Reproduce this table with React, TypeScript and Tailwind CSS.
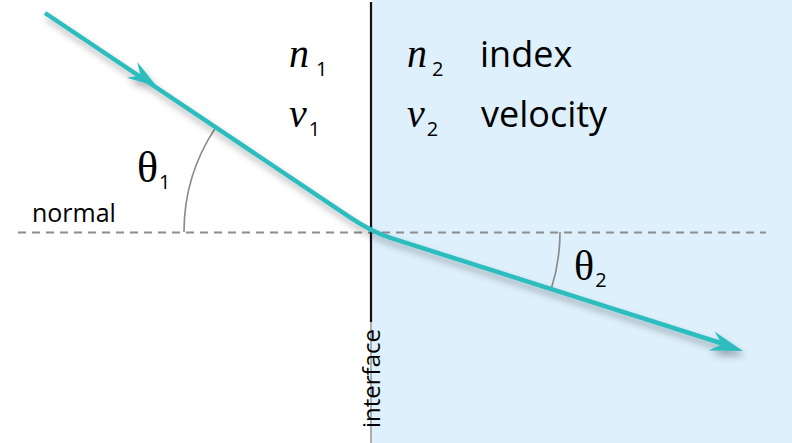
import React from "react";

const RAY = "#2ebdbe";

function arrowHead(tx: number, ty: number, dx: number, dy: number, back: number, notch: number, half: number) {
  const l = Math.hypot(dx, dy);
  const ux = dx / l;
  const uy = dy / l;
  const nx = -uy;
  const ny = ux;
  const p = (a: number, b: number) => `${(tx + a * ux + b * nx).toFixed(1)},${(ty + a * uy + b * ny).toFixed(1)}`;
  return `${p(0, 0)} ${p(-back, -half)} ${p(-notch, 0)} ${p(-back, half)}`;
}

function Diagram() {
  return (
    <svg className="absolute inset-0" width={792} height={443} viewBox="0 0 792 443">
      <defs>
        <filter id="sh" x="-20%" y="-20%" width="140%" height="160%">
          <feDropShadow dx="2" dy="5" stdDeviation="3.5" floodColor="#000" floodOpacity="0.3" />
        </filter>
      </defs>
      <line x1={18} y1={232.5} x2={766} y2={232.5} stroke="#8c8c8c" strokeWidth={2} strokeDasharray="8 6" />
      <line x1={371} y1={2} x2={371} y2={322} stroke="#111" strokeWidth={2.2} />
      <line x1={371} y1={322} x2={371} y2={443} stroke="#9a9a9a" strokeWidth={1.6} />
      <path d="M 215.8 127.4 A 188 188 0 0 0 184 232" fill="none" stroke="#8c8c8c" strokeWidth={1.7} />
      <path d="M 560 232 A 188 188 0 0 1 551.2 289" fill="none" stroke="#8c8c8c" strokeWidth={1.7} />
      <g filter="url(#sh)">
        <path
          d="M 45 13 L 350 217.3 Q 372 232 392 238.4 L 730 346"
          fill="none"
          stroke={RAY}
          strokeWidth={4.5}
          strokeLinejoin="round"
        />
        <polygon points={arrowHead(157, 86.5, 0.831, 0.556, 30, 20, 9.5)} fill={RAY} />
        <polygon points={arrowHead(743, 351, 0.953, 0.303, 33, 22, 10)} fill={RAY} />
      </g>
    </svg>
  );
}

const serif = "font-['Liberation_Serif',serif]";
const sans = "font-['Open_Sans',sans-serif]";

function Sym({ ch, sub, gap }: { ch: string; sub: string; gap: string }) {
  return (
    <span className="whitespace-nowrap">
      <span className={`${serif} italic text-[40px]`}>{ch}</span>
      <span className={`${sans} text-[20px] relative top-[9px] ${gap}`}>{sub}</span>
    </span>
  );
}

function Theta({ sub, size }: { sub: string; size: string }) {
  return (
    <span className="whitespace-nowrap">
      <span className={`${serif} ${size}`}>θ</span>
      <span className={`${sans} text-[20px] relative top-[7px] ml-[1px]`}>{sub}</span>
    </span>
  );
}

export default function App() {
  return (
    <div className="relative w-[792px] h-[443px] overflow-hidden flex bg-white text-black">
      <div className="w-[372px] h-full bg-white" />
      <div className="flex-1 h-full bg-[#ddf0fc]" />
      <Diagram />

      {/* medium 1 labels */}
      <div className="absolute left-[289px] top-[34px] flex flex-col gap-[20px] leading-none">
        <div className="h-[40px] flex items-baseline">
          <Sym ch="n" sub="1" gap="ml-[7px]" />
        </div>
        <div className="h-[40px] flex items-baseline">
          <Sym ch="v" sub="1" gap="ml-[2px]" />
        </div>
      </div>

      {/* medium 2 labels */}
      <div className="absolute left-[407px] top-[34px] flex flex-col gap-[20px] leading-none">
        <div className="h-[40px] flex items-baseline">
          <div className="w-[73px]">
            <Sym ch="n" sub="2" gap="ml-[5px]" />
          </div>
          <span className={`${sans} text-[36px]`}>index</span>
        </div>
        <div className="h-[40px] flex items-baseline">
          <div className="w-[74px]">
            <Sym ch="v" sub="2" gap="ml-[2px]" />
          </div>
          <span className={`${sans} text-[36px]`}>velocity</span>
        </div>
      </div>

      <div className="absolute left-[137px] top-[146px] leading-none">
        <Theta sub="1" size="text-[44px]" />
      </div>
      <div className="absolute left-[574px] top-[245px] leading-none">
        <Theta sub="2" size="text-[42px]" />
      </div>

      <div className={`absolute left-[32px] top-[200px] leading-none ${sans} text-[25px]`}>normal</div>

      <div
        className={`absolute left-[359px] top-[428px] origin-top-left -rotate-90 leading-none ${sans} text-[24px] whitespace-nowrap`}
      >
        interface
      </div>
    </div>
  );
}
